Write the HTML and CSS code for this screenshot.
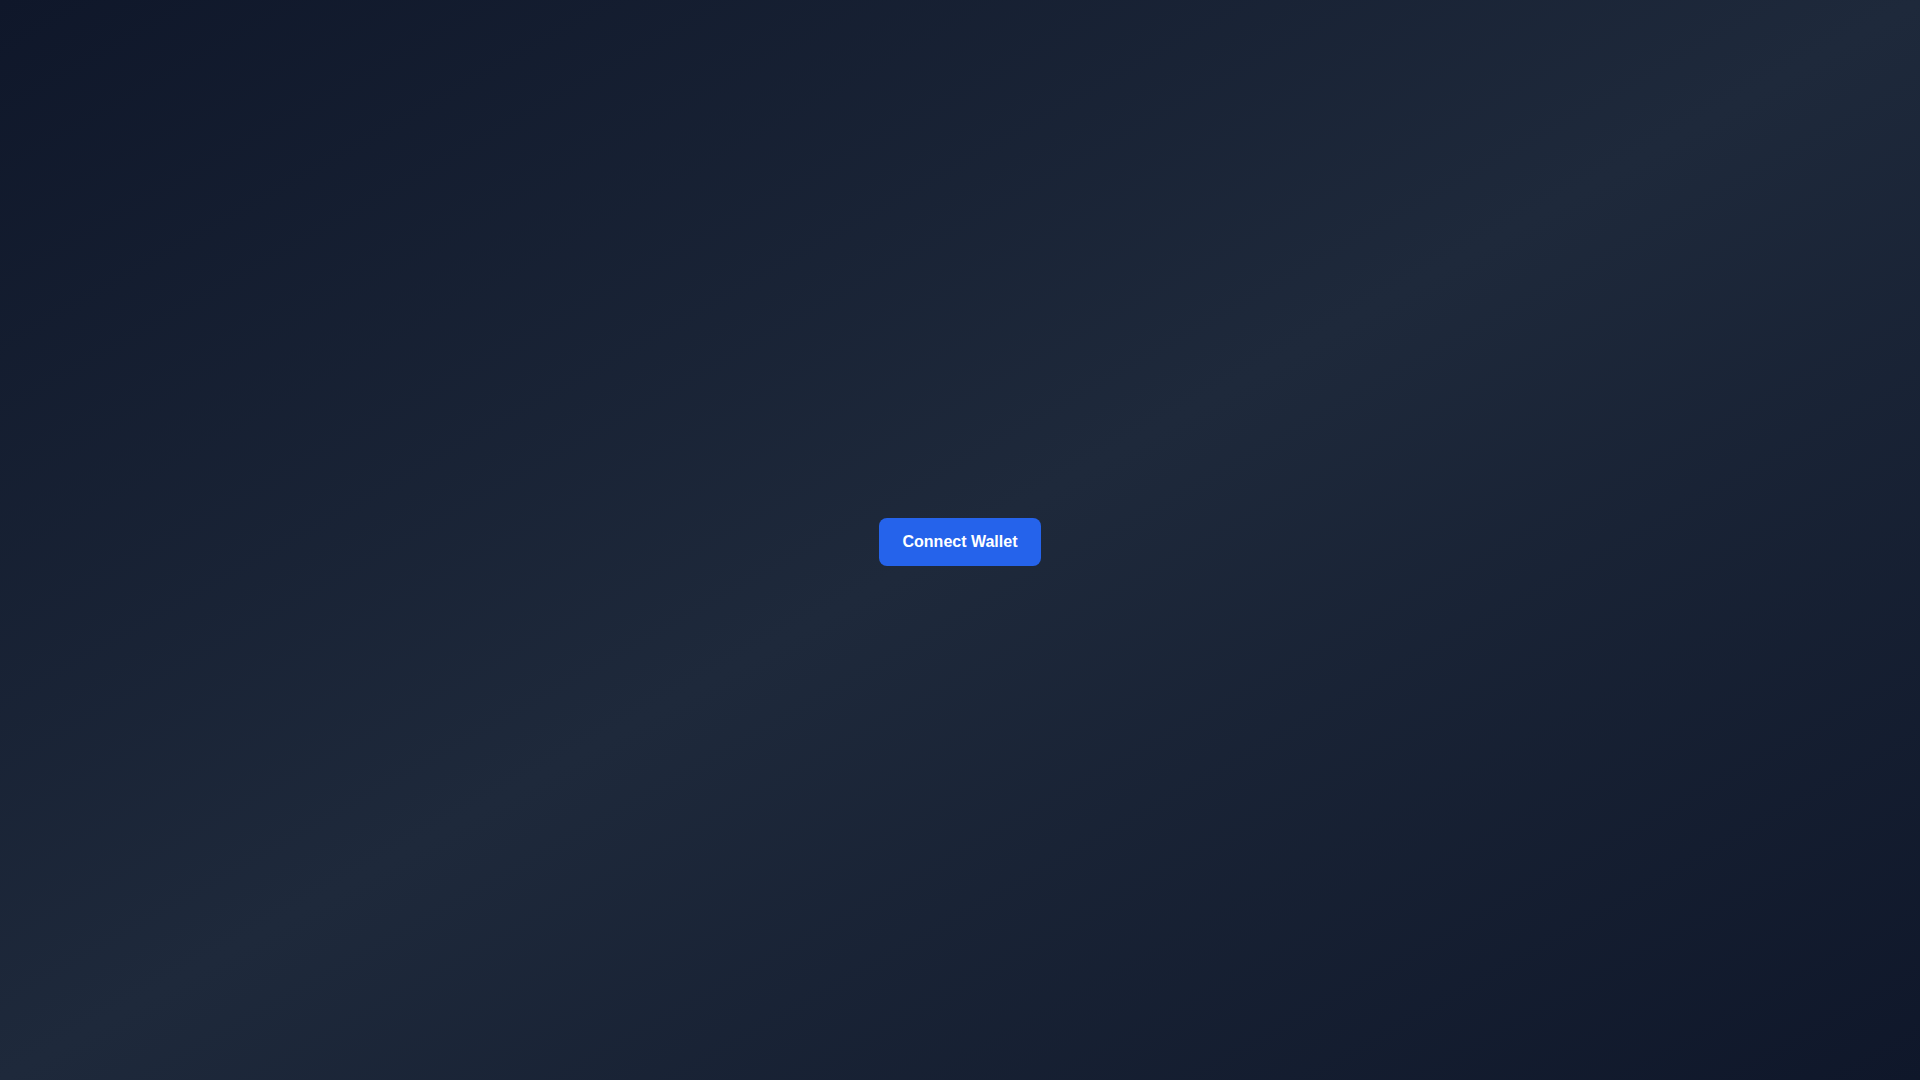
FILE: index.html
```html
<!DOCTYPE html>
<html lang="en">
<head>
<meta charset="utf-8">
<title>Connect Wallet</title>
<link rel="stylesheet" href="styles.css">
</head>
<body>
<main class="page">
  <button class="connect-btn" type="button">Connect Wallet</button>
</main>
</body>
</html>
```

FILE: styles.css
```css
html, body {
  margin: 0;
  padding: 0;
  height: 100%;
}
body {
  font-family: "Liberation Sans", Arial, sans-serif;
}
.page {
  min-height: 100vh;
  box-sizing: border-box;
  padding-top: 4px;
  display: flex;
  align-items: center;
  justify-content: center;
  background: linear-gradient(to bottom right, #0f172a 0%, #1e293b 50%, #0f172a 100%);
}
.connect-btn {
  font-family: "Liberation Sans", Arial, sans-serif;
  font-size: 16px;
  font-weight: 700;
  line-height: 24px;
  color: #ffffff;
  background: #2563eb;
  border: none;
  border-radius: 8px;
  padding: 12px 24px;
  cursor: pointer;
}
```
